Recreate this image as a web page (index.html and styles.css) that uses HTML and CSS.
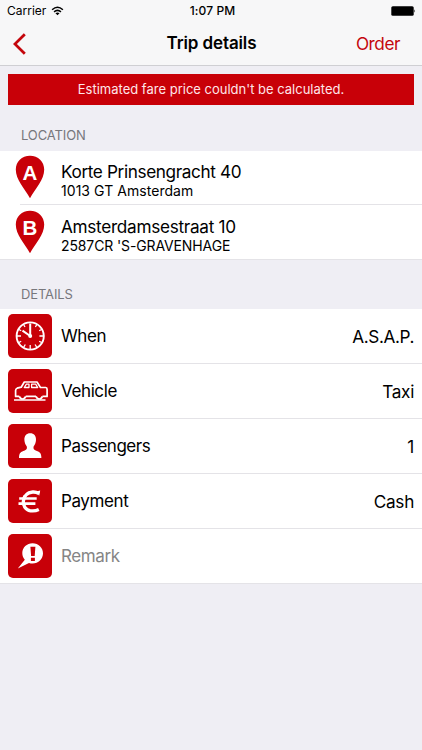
FILE: index.html
```html
<!DOCTYPE html>
<html lang="en">
<head>
<meta charset="utf-8">
<title>Trip details</title>
<link rel="stylesheet" href="styles.css">
</head>
<body>
<header class="top">
  <div class="status">
    <div class="carrier"><span>Carrier</span>
      <svg class="wifi" width="13" height="10" viewBox="0 0 14 10"><g fill="none" stroke="#000" stroke-width="1.6"><path d="M1.2 3.7Q7-1.7 12.8 3.7"/><path d="M3.3 6Q7 2.7 10.7 6"/></g><path d="M7 9.5 4.8 7.3Q7 5.7 9.2 7.3Z"/></svg>
    </div>
    <div class="time">1:07 PM</div>
    <svg class="battery" width="25" height="10" viewBox="0 0 25 10"><rect x=".3" y=".3" width="22.4" height="9.4" rx="1.5"/><path d="M23.4 3.3q1.4 1.7 0 3.4z"/></svg>
  </div>
  <nav class="nav">
    <svg class="back" width="14" height="22" viewBox="0 0 14 22"><path d="M11.800 1.200 1.900 11l9.900 9.800" fill="none" stroke="#c4060c" stroke-width="2.8"/></svg>
    <h1>Trip details</h1>
    <a class="order">Order</a>
  </nav>
</header>
<main>
  <p class="banner"><span>Estimated fare price couldn't be calculated.</span></p>
  <h2 class="location-title">LOCATION</h2>
  <section class="list locations">
    <div class="row">
      <svg class="pin" width="30" height="44" viewBox="0 0 30 44"><path d="M15 .8C6.800.8.8 6.800.8 14.600.8 25 9.500 33.500 15 43.200 20.500 33.500 29.200 25 29.200 14.600 29.200 6.800 23.200.8 15 .8Z" fill="#c80008"/><text x="15" y="24.500">A</text></svg>
      <div class="address"><div class="street name-a">Korte Prinsengracht 40</div><div class="city city-a">1013 GT Amsterdam</div></div>
    </div>
    <div class="row">
      <svg class="pin" width="30" height="44" viewBox="0 0 30 44"><path d="M15 .8C6.800.8.8 6.800.8 14.600.8 25 9.500 33.500 15 43.200 20.500 33.500 29.200 25 29.200 14.600 29.200 6.800 23.200.8 15 .8Z" fill="#c80008"/><text x="15" y="24.500">B</text></svg>
      <div class="address"><div class="street">Amsterdamsestraat 10</div><div class="city">2587CR 'S-GRAVENHAGE</div></div>
    </div>
  </section>
  <h2 class="details-title">DETAILS</h2>
  <section class="list">
    <div class="row">
      <svg class="icon" viewBox="0 0 44 44"><g fill="none" stroke="#fff"><circle cx="22.200" cy="22" r="13.600" stroke-width="1.900"/><path d="M22.200 22V9.500M22.200 22 14.500 16.600" stroke-width="2"/><path d="M22.200 35v-4M9 22h4M31.400 22h4M15.700 33.300l1.600-2.800M28.700 33.300l-1.600-2.800M10.900 28.500l2.300-1.300M33.500 28.500l-2.300-1.300M10.900 15.500l2.300 1.300M33.500 15.500l-2.300 1.300M15.700 10.700l1.300 2.300M28.700 10.700l-1.300 2.300" stroke-width="1.300"/></g><circle cx="22.200" cy="22" r="2" fill="#fff"/></svg>
      <span class="label">When</span><span class="value asap">A.S.A.P.</span>
    </div>
    <div class="row">
      <svg class="icon" viewBox="0 0 44 44"><g fill="none" stroke="#fff" stroke-width="1.700" stroke-linejoin="round"><path d="M11.300 27.400H7.600V21.500q0-1.800 1.500-2.300l4.100-1L16.300 13H29L32.500 18.500h5.200q1.400.2 1.400 2v6.900H34.400M17.700 27.400H28"/><path d="M16.300 18.500 18.400 15.200h2.600v3.300zM23.600 18.500v-3.300h4.100l2 3.300z" stroke-width="1.300"/><path d="M11.300 27.400q1 2.600 3.200 2.600t3.200-2.600M28 27.400q1 2.600 3.200 2.600t3.200-2.600"/><path d="M6 31H37.500"/></g></svg>
      <span class="label">Vehicle</span><span class="value">Taxi</span>
    </div>
    <div class="row">
      <svg class="icon" viewBox="0 0 44 44"><path d="M22.200 9.200c-3.700 0-6 2.700-5.800 6.800.1 2.500 1 4.700 2.300 6.300.7 2.300-.1 3.500-2 4.200-3.700 1.300-5.700 2-5.700 7.500h22.400c0-5.500-2.100-6.200-5.700-7.500-1.900-.7-2.700-1.900-2-4.200 1.300-1.600 2.200-3.800 2.300-6.300.2-4.100-2.100-6.800-5.800-6.800Z" fill="#fff"/></svg>
      <span class="label passengers">Passengers</span><span class="value">1</span>
    </div>
    <div class="row">
      <svg class="icon" viewBox="0 0 44 44"><g fill="none" stroke="#fff"><path d="M31 14.500Q28 12.800 24.800 13C12.800 14 12.400 30.200 22.500 31.800Q27 32.400 30.800 30.600" stroke-width="3.300"/><path d="M16 16.500Q13.700 22 16.300 28.500" stroke-width="1.500"/><path d="M11.200 19.500H28.700M10.500 24.600H27.400" stroke-width="2.600"/></g><path d="M28 12.500 32.200 11.600 31.200 16.700Z" fill="#fff"/></svg>
      <span class="label">Payment</span><span class="value">Cash</span>
    </div>
    <div class="row">
      <svg class="icon" viewBox="0 0 44 44"><path d="M24.600 9.300c-5.800 0-10.300 4.300-10.300 9.700 0 2.600.9 4.900 2.500 6.700L9.800 34.500l11.200-5.400q1.700.5 3.600.5c5.800 0 10.400-4.700 10.400-10.300s-4.600-10-10.400-10Z" fill="#fff"/><path d="M22.400 12.700h5l-.7 9.200h-3.600zM22.900 23.700h4v3.200h-4z" fill="#c80008"/></svg>
      <span class="label remark">Remark</span>
    </div>
  </section>
</main>
</body>
</html>
```
FILE: styles.css
```css
* { box-sizing: border-box; }
body { margin: 0; width: 422px; height: 750px; overflow: hidden; background: #efeef4; color: #000; font-family: Inter, "Liberation Sans", sans-serif; }
h1, h2, p { margin: 0; }
.top { height: 66px; background: #f7f7f8; border-bottom: 1px solid #cfcfd3; }
.status { height: 22px; display: grid; grid-template-columns: 1fr auto 1fr; align-items: center; padding: 0 6px 0 7px; font-size: 12px; line-height: 22px; }
.carrier { display: flex; align-items: center; gap: 5px; }
.time { font-weight: 500; letter-spacing: .1px; padding-left: 2px; }
.battery { justify-self: end; }
.nav { height: 43px; display: grid; grid-template-columns: 1fr auto 1fr; align-items: center; padding: 0 13px; }
h1 { font-size: 17px; line-height: 43px; font-weight: 600; letter-spacing: -.12px; padding-left: 1px; }
.order { justify-self: end; padding-right: 9px; color: #c4060c; font-size: 17.2px; letter-spacing: -.45px; }
.banner { height: 31px; margin: 8px 8px 0; background: #c80008; color: #ffe5e8; font-size: 13px; line-height: 30px; text-align: center; }
h2 { color: #77777c; font-size: 13px; line-height: 16px; font-weight: 400; padding-left: 21px; letter-spacing: -.12px; }
.location-title { margin-top: 22px; margin-bottom: 8px; }
.details-title { margin-top: 26px; margin-bottom: 7px; }
.list { background: #fff; }
.row { height: 55px; display: flex; align-items: center; padding: 0 8px 1px; background: linear-gradient(#e4e3e7, #e4e3e7) 20px 100% / 402px 1px no-repeat; }
.row:last-child { background-position: 0 100%; background-size: 100% 1px; }
.locations .row:first-child { height: 54px; padding-bottom: 2px; }
.pin { margin: 0 16px 0 7px; flex: none; }
.pin text { fill: #fff; font: 700 20.5px "Liberation Sans", sans-serif; text-anchor: middle; }
.icon { width: 44px; height: 44px; margin-right: 9px; border-radius: 5px; background: #c80008; flex: none; }
.street, .label, .value { font-size: 17.2px; line-height: 22px; letter-spacing: -.3px; }
.street { padding-top: 6px; box-sizing: content-box; white-space: nowrap; }
.name-a { letter-spacing: -.38px; }
.city { font-size: 14px; line-height: 16px; white-space: nowrap; letter-spacing: -.12px; }
.city-a { letter-spacing: .05px; }
.label { padding-bottom: 1px; font-size: 17px; letter-spacing: -.4px; }
.passengers { letter-spacing: -.48px; }
.value { margin-left: auto; padding-top: 1px; }
.asap { letter-spacing: -.4px; }
.remark { color: #858585; }
```
